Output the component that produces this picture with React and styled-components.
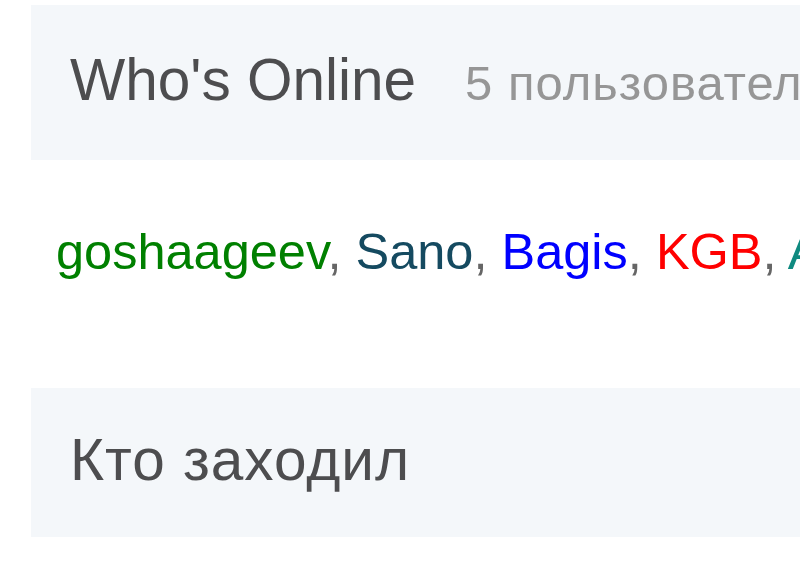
import React from 'react';
import styled, {createGlobalStyle} from 'styled-components';

const GlobalStyle = createGlobalStyle`
  html, body {
    margin: 0;
    padding: 0;
    background: #ffffff;
    overflow: hidden;
  }
  body {
    font-family: "Liberation Sans", Arial, Helvetica, sans-serif;
  }
`

const users = [
    {name: 'goshaageev', color: '#008000'},
    {name: 'Sano', color: '#154a60'},
    {name: 'Bagis', color: '#0000ff'},
    {name: 'KGB', color: '#ff0000'},
    {name: 'Alexey', color: '#0f8a80'},
]

const App = () => {
    return (
        <Page>
            <GlobalStyle/>
            <Block>
                <Header $padTop={42} $padBottom={44}>
                    <Title>Who's Online</Title>
                    <Count>5 пользователей онлайн</Count>
                </Header>
                <UserList>
                    {users.map((user, i) => (
                        <React.Fragment key={user.name}>
                            <UserName $color={user.color}>{user.name}</UserName>
                            {i < users.length - 1 && <Separator>, </Separator>}
                        </React.Fragment>
                    ))}
                </UserList>
            </Block>
            <Block>
                <Header $padTop={39} $padBottom={44}>
                    <Title $spacing={1}>Кто заходил</Title>
                </Header>
            </Block>
        </Page>
    )
}
export default App

const Page = styled.div`
  width: 1400px;
  padding: 5px 0 0 31px;
  display: flex;
  flex-direction: column;
`

const Block = styled.section`
  display: flex;
  flex-direction: column;
`

const Header = styled.div`
  display: flex;
  align-items: baseline;
  gap: 49px;
  background: #f4f7fa;
  padding: ${p => p.$padTop}px 39px ${p => p.$padBottom}px 39px;
  white-space: nowrap;
`

const Title = styled.h2`
  margin: 0;
  font-size: 58.5px;
  line-height: 66px;
  font-weight: normal;
  letter-spacing: ${p => p.$spacing || 0}px;
  color: #4d4d4f;
`

const Count = styled.span`
  font-size: 49px;
  line-height: 66px;
  letter-spacing: 1px;
  color: #969696;
`

const UserList = styled.div`
  padding: 63px 0 0 25px;
  margin-bottom: 107px;
  font-size: 50.5px;
  line-height: 58px;
  white-space: nowrap;
`

const UserName = styled.span`
  color: ${p => p.$color};
`

const Separator = styled.span`
  color: #666666;
`
